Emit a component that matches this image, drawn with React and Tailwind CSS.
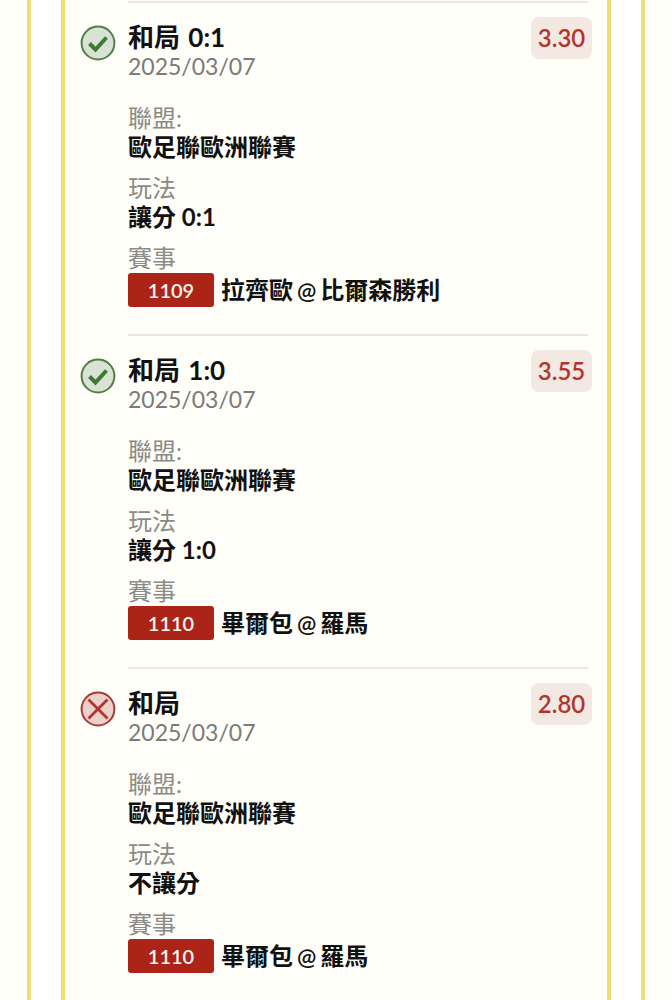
import React from 'react';

const rows = [
  { ok: true, title: '和局 0:1', odds: '3.30', play: '讓分 0:1', no: '1109', home: '拉齊歐', away: '比爾森勝利' },
  { ok: true, title: '和局 1:0', odds: '3.55', play: '讓分 1:0', no: '1110', home: '畢爾包', away: '羅馬' },
  { ok: false, title: '和局', odds: '2.80', play: '不讓分', no: '1110', home: '畢爾包', away: '羅馬' },
];

const StatusIcon = ({ ok }) => (
  <svg width="36" height="36" viewBox="0 0 36 36" fill="none">
    <circle cx="18" cy="18" r="16.4" fill={ok ? '#d9e3d5' : '#ecd0cd'} stroke={ok ? '#4f7f45' : '#a83a33'} strokeWidth="2" />
    {ok ? (
      <path d="M9.5 18.5l6 6L26.5 12.5" stroke="#3f7a35" strokeWidth="4" />
    ) : (
      <path d="M8.5 8.5l19 19M27.5 8.5l-19 19" stroke="#b3342c" strokeWidth="2.8" />
    )}
  </svg>
);

const Field = ({ label, value }) => (
  <div className="mb-[12px]">
    <div className="text-[24px] leading-[29px] text-[#8a8a86]">{label}</div>
    <div className="text-[24px] leading-[29px] font-bold text-[#111]">{value}</div>
  </div>
);

const Row = ({ row }) => (
  <div className="ml-[63px] mr-[19px] h-[333px] border-t-2 border-[#e8e7e1]">
    <div className="flex pt-[18px]">
      <div className="w-[48px] -ml-[48px] -mt-[2px] pt-[6px] shrink-0">
        <StatusIcon ok={row.ok} />
      </div>
      <div className="flex-1">
        <div className="flex justify-between">
          <div>
            <div className="text-[26px] leading-[32px] font-bold text-[#111] [word-spacing:2px]">{row.title}</div>
            <div className="text-[23px] leading-[26px] text-[#7b7b78]">2025/03/07</div>
          </div>
          <div className="-mr-[4px] -mt-[4px] w-[61px] h-[42px] flex items-center justify-center rounded-lg bg-[#f3e8e2] text-[24px] font-semibold text-[#b2352c]">
            {row.odds}
          </div>
        </div>
        <div className="mt-[24px]">
          <Field label="聯盟:" value="歐足聯歐洲聯賽" />
          <Field label="玩法" value={row.play} />
          <div className="text-[24px] leading-[29px] text-[#8a8a86]">賽事</div>
          <div className="flex items-center gap-[7px]">
            <span className="w-[86px] h-[34px] flex items-center justify-center rounded-[3px] bg-[#ac2318] text-[20px] font-semibold text-[#fdf6ee]">
              {row.no}
            </span>
            <span className="flex items-center text-[24px] font-bold text-[#111]">
              {row.home}
              <span className="mx-[4px] text-[23px] font-semibold">@</span>
              {row.away}
            </span>
          </div>
        </div>
      </div>
    </div>
  </div>
);

export default function App() {
  return (
    <div
      className="h-[1000px] overflow-hidden bg-[#fffef8] px-[27px]"
      style={{ fontFamily: 'Lato, "Noto Sans CJK TC", sans-serif' }}
    >
      <div className="h-full border-x-4 border-[#f3dc72] bg-white px-[30px]">
        <div className="h-full border-x-4 border-[#f3dc72] bg-[#fffef8] pt-[1px]">
          {rows.map((row, i) => (
            <Row key={i} row={row} />
          ))}
        </div>
      </div>
    </div>
  );
}
